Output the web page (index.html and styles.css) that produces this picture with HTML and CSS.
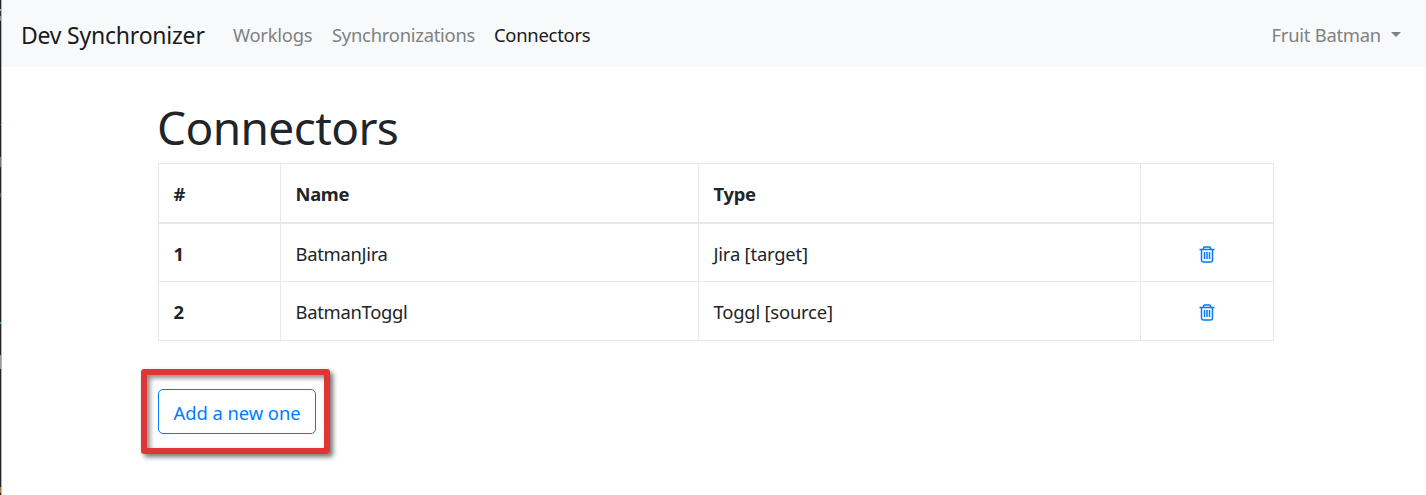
FILE: index.html
```html
<!DOCTYPE html>
<html lang="en">
<head>
<meta charset="utf-8">
<title>Dev Synchronizer</title>
<link rel="stylesheet" href="styles.css">
</head>
<body>
<div class="edge"></div>
<div class="page">
  <nav class="navbar">
    <a class="brand">Dev Synchronizer</a>
    <a class="link link-worklogs">Worklogs</a>
    <a class="link link-sync">Synchronizations</a>
    <a class="link link-connectors active">Connectors</a>
    <a class="link user"><span>Fruit Batman</span><i class="caret"></i></a>
  </nav>
  <main class="container">
    <h1>Connectors</h1>
    <table class="table">
      <colgroup><col class="c-num"><col class="c-name"><col class="c-type"><col class="c-action"></colgroup>
      <thead>
        <tr><th>#</th><th>Name</th><th>Type</th><th></th></tr>
      </thead>
      <tbody>
        <tr>
          <th>1</th><td>BatmanJira</td><td class="type">Jira [target]</td>
          <td class="action"><svg class="trash" viewBox="0 0 16 17"><path d="M.5 3.5h15M4.5 3V2.2Q4.5 1 5.7 1h4.6q1.2 0 1.2 1.2V3M2.5 3.5v10.8q0 1.7 1.7 1.7h7.6q1.7 0 1.7-1.7V3.5M5.5 6v7M8 6v7M10.5 6v7"/></svg></td>
        </tr>
        <tr>
          <th>2</th><td>BatmanToggl</td><td class="type">Toggl [source]</td>
          <td class="action"><svg class="trash" viewBox="0 0 16 17"><path d="M.5 3.5h15M4.5 3V2.2Q4.5 1 5.7 1h4.6q1.2 0 1.2 1.2V3M2.5 3.5v10.8q0 1.7 1.7 1.7h7.6q1.7 0 1.7-1.7V3.5M5.5 6v7M8 6v7M10.5 6v7"/></svg></td>
        </tr>
      </tbody>
    </table>
    <div class="highlight"><button class="btn">Add a new one</button></div>
  </main>
</div>
</body>
</html>
```
FILE: styles.css
```css
* { box-sizing: border-box; }
body {
  margin: 0;
  height: 495px;
  display: flex;
  overflow: hidden;
  background: #fff;
  color: #212529;
  font: 400 18.4px/28px "Noto Sans", "Open Sans", sans-serif;
}
.edge {
  flex: none;
  width: 2px;
  border-right: 1px solid #f5b324;
  background: linear-gradient(#222 9px, #aaa 9px 11px, #333 11px 16px, #888 16px 21px, #222 21px 124px, #a33 124px 125px, #222 125px 157px, #777 157px 167px, #222 167px 193px, #665544 193px 197px, #222 197px 322px, #4a4 322px 324px, #222 324px 355px, #999 355px 369px, #222 369px 487px, #a98450 487px 493px, #222 493px);
}
.page { flex: 1; }
.navbar {
  display: flex;
  align-items: center;
  height: 67px;
  padding: 2px 25px 0 19px;
  background: #f8f9fa;
  white-space: nowrap;
}
.brand { width: 212px; font-size: 23px; letter-spacing: -0.22px; color: #1a1b1b; }
.link { color: #808182; letter-spacing: -0.25px; }
.link-worklogs { width: 99px; }
.link-sync { width: 162px; }
.active { color: #191919; }
.user { margin-left: auto; display: flex; align-items: center; }
.caret {
  margin-left: 10px;
  border: 5px solid transparent;
  border-top-color: #808182;
  border-bottom: 0;
}
.container { width: 1116px; margin: 33px 0 0 156px; }
h1 { margin: 0 0 8px -1px; font-size: 46px; line-height: 55px; font-weight: 400; letter-spacing: -0.6px; }
.table {
  width: 1116px;
  table-layout: fixed;
  border-collapse: separate;
  border-spacing: 0;
  border: solid #e6e9ec;
  border-width: 1px 0 0 1px;
}
.c-num { width: 122px; }
.c-name { width: 418px; }
.c-type { width: 442px; }
.c-action { width: 133px; }
th, td {
  height: 58px;
  padding: 3px 14px 0 14.5px;
  text-align: left;
  vertical-align: middle;
  border: solid #e6e9ec;
  border-width: 0 1px 1px 0;
  letter-spacing: -0.3px;
}
th { font-weight: 700; }
thead th { height: 60px; padding-top: 1px; border-bottom-width: 2px; }
tbody tr:last-child > * { height: 59px; padding-top: 1px; }
.type { letter-spacing: -0.2px; }
.action { text-align: center; }
.trash {
  display: block;
  width: 16px;
  height: 17px;
  margin: auto;
  fill: none;
  stroke: #007bff;
  stroke-width: 1.5;
}
tbody tr:last-child .trash { margin-bottom: -1px; }
.highlight {
  width: 189px;
  height: 85px;
  margin: 28px 0 0 -17px;
  padding: 14px 8px 14px 11px;
  border: 6px solid #e03535;
  border-radius: 3px;
  box-shadow: 3px 3px 5px rgba(0,0,0,.55), inset 3px 3px 5px rgba(0,0,0,.45);
}
.btn {
  display: block;
  width: 158px;
  height: 45px;
  padding: 2px 0 0;
  border: 1px solid #007bff;
  border-radius: 5px;
  background: #fff;
  color: #007bff;
  font: inherit;
  letter-spacing: -0.05px;
}
```
